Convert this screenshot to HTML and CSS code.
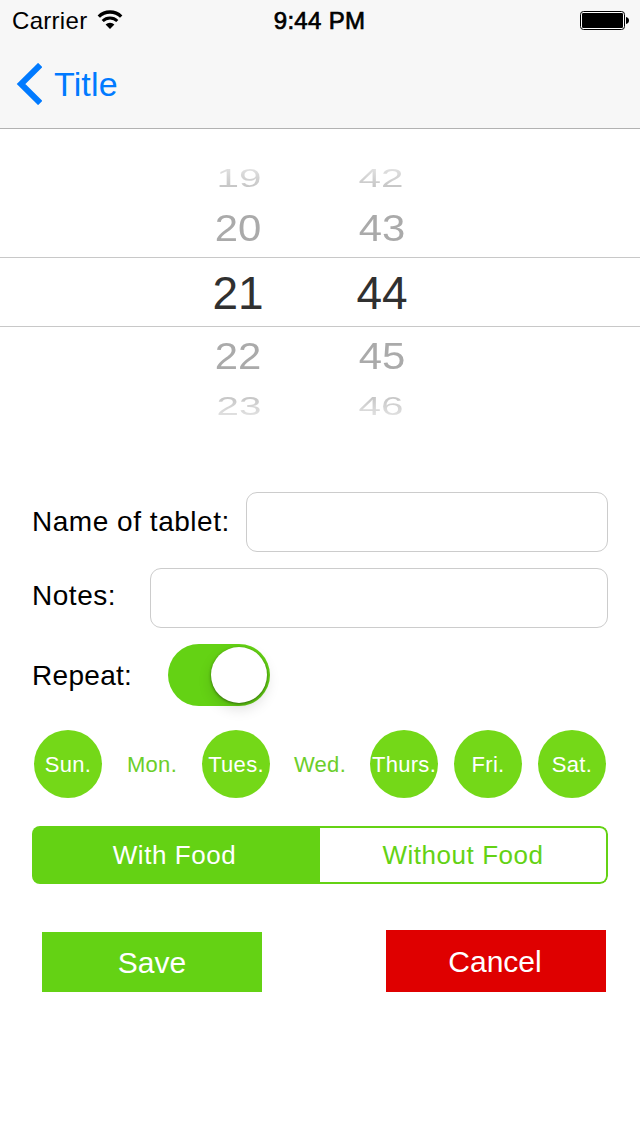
FILE: index.html
```html
<!DOCTYPE html>
<html lang="en">
<head>
<meta charset="utf-8">
<title>Tablet reminder</title>
<link rel="stylesheet" href="styles.css">
</head>
<body>
<header class="header">
  <div class="status">
    <div class="carrier"><span>Carrier</span>
      <svg class="wifi" width="26" height="19" viewBox="0 0 26 19">
        <path d="M1.8 6.6a16 16 0 0 1 22.4 0" fill="none" stroke="#000" stroke-width="3.4"/>
        <path d="M5.7 11a10.4 10.4 0 0 1 14.6 0" fill="none" stroke="#000" stroke-width="3"/>
        <path d="M13 19l-4.4-4.4a6.2 6.2 0 0 1 8.8 0z" fill="#000"/>
      </svg>
    </div>
    <div class="time">9:44 PM</div>
    <svg class="battery" width="50" height="20" viewBox="0 0 50 20">
      <rect x=".5" y=".5" width="44" height="18" rx="3" fill="#fff" stroke="#000"/>
      <rect x="2" y="2" width="41" height="15" rx="1.2" fill="#000"/>
      <path d="M46 6q3 .8 3 3.5T46 13z" fill="#000"/>
    </svg>
  </div>
  <nav class="nav">
    <svg width="26" height="42" viewBox="0 0 26 42"><path d="M24.2 2L5 21l19.2 19" fill="none" stroke="#007aff" stroke-width="6"/></svg>
    <a class="back">Title</a>
  </nav>
</header>
<main>
  <section class="picker">
    <div class="row far far-top"><span>19</span><span>42</span></div>
    <div class="row near near-top"><span>20</span><span>43</span></div>
    <div class="row current"><span>21</span><span>44</span></div>
    <div class="row near near-bottom"><span>22</span><span>45</span></div>
    <div class="row far far-bottom"><span>23</span><span>46</span></div>
  </section>
  <section class="form">
    <div class="field"><label class="label name" for="name">Name of tablet:</label><input class="input" id="name" type="text"></div>
    <div class="field"><label class="label notes" for="notes">Notes:</label><input class="input" id="notes" type="text"></div>
    <div class="field repeat"><span class="label repeat-label">Repeat:</span><div class="switch"><div class="knob"></div></div></div>
    <div class="days">
      <div class="day on">Sun.</div><div class="day">Mon.</div><div class="day on">Tues.</div><div class="day">Wed.</div><div class="day on">Thurs.</div><div class="day on">Fri.</div><div class="day on">Sat.</div>
    </div>
    <div class="segments"><div class="segment selected">With Food</div><div class="segment outlined">Without Food</div></div>
    <div class="actions"><div class="button save">Save</div><div class="button cancel">Cancel</div></div>
  </section>
</main>
</body>
</html>
```
FILE: styles.css
```css
* { box-sizing: border-box; }
body {
  margin: 0;
  width: 640px;
  height: 1136px;
  overflow: hidden;
  background: #fff;
  color: #000;
  font-family: "Liberation Sans", Arial, sans-serif;
}
svg { display: block; flex: none; }
.header {
  height: 129px;
  background: #f7f7f7;
  border-bottom: 1px solid #b2b2b2;
}
.status {
  display: grid;
  grid-template-columns: 1fr 100px 1fr;
  align-items: center;
  height: 40px;
  padding: 1px 10px 0 12px;
  font-size: 24px;
  letter-spacing: .3px;
}
.carrier { display: flex; align-items: center; gap: 10px; }
.wifi { margin-top: -2px; }
.time { padding-right: 3px; text-align: center; white-space: nowrap; -webkit-text-stroke: .7px #000; }
.battery { justify-self: end; }
.nav {
  display: flex;
  align-items: center;
  gap: 12px;
  height: 88px;
  padding-left: 16px;
  color: #007aff;
  font-size: 34px;
}
.back { line-height: 40px; padding-bottom: 1px; letter-spacing: .15px; }
.picker {
  height: 307px;
  padding: 24px 20px 0 0;
}
.row {
  display: flex;
  justify-content: center;
  align-items: center;
  gap: 44px;
  font-size: 46px;
  line-height: 1;
}
.row span { width: 100px; text-align: center; }
.current {
  height: 70px;
  margin-right: -20px;
  padding: 2px 20px 0 0;
  border: solid #c8c8c8;
  border-width: 1px 0;
  color: #303030;
}
.near { color: #aaa; }
.near span { transform: scale(.91, .82); }
.near-top { height: 54px; padding-bottom: 4px; }
.near-bottom { height: 58px; }
.far { gap: 42px; }
.far span {
  color: transparent;
  background: linear-gradient(#e0e0e0 15%, #c6c6c6 85%);
  background-clip: text;
  -webkit-background-clip: text;
  transform: scale(.88, .56);
}
.far-top { height: 50px; }
.far-bottom { height: 42px; }
.far-bottom span { background-image: linear-gradient(#c6c6c6 15%, #e0e0e0 85%); }
.form { padding: 56px 32px 0; }
.field { display: flex; align-items: center; height: 60px; margin-bottom: 16px; }
.label { flex: none; font-size: 28px; letter-spacing: .53px; white-space: nowrap; }
.name { width: 214px; }
.notes { width: 118px; padding-bottom: 5px; }
.repeat { height: 62px; margin-bottom: 24px; }
.repeat-label { width: 136px; padding-top: 2px; letter-spacing: .3px; }
.input {
  flex: 1;
  min-width: 0;
  height: 60px;
  border: 1px solid #ccc;
  border-radius: 11px;
  background: #fff;
  font: inherit;
}
.switch {
  display: flex;
  justify-content: flex-end;
  width: 102px;
  height: 62px;
  padding: 3px;
  border-radius: 31px;
  background: #64d214;
}
.knob {
  width: 56px;
  height: 56px;
  border-radius: 50%;
  background: #fff;
  box-shadow: 0 1px 3px rgba(0, 0, 0, .45), 0 6px 14px rgba(0, 0, 0, .13);
}
.days { display: flex; gap: 16px; padding: 0 2px; margin-bottom: 28px; }
.day {
  display: flex;
  justify-content: center;
  align-items: center;
  width: 68px;
  height: 68px;
  border-radius: 50%;
  padding-top: 1px;
  color: #6cce2a;
  font-size: 22px;
  letter-spacing: .3px;
  white-space: nowrap;
}
.on { background: #74d818; color: #fff; }
.segments {
  display: flex;
  height: 58px;
  margin-bottom: 46px;
  border-radius: 8px;
  overflow: hidden;
}
.segment {
  flex: none;
  width: 288px;
  display: flex;
  justify-content: center;
  align-items: center;
  color: #64d214;
  font-size: 26px;
  letter-spacing: .55px;
}
.selected { background: #64d214; color: #fff; padding-right: 3px; }
.outlined {
  border: 2px solid #64d214;
  border-left: 0;
  border-radius: 0 8px 8px 0;
}
.actions { display: flex; justify-content: space-between; align-items: flex-end; padding: 0 2px 0 10px; }
.button {
  display: flex;
  justify-content: center;
  align-items: center;
  width: 220px;
  color: #fff;
  font-size: 30px;
}
.save { height: 60px; background: #64d214; padding-top: 1px; }
.cancel { height: 62px; background: #df0000; padding: 1px 2px 0 0; }
```
